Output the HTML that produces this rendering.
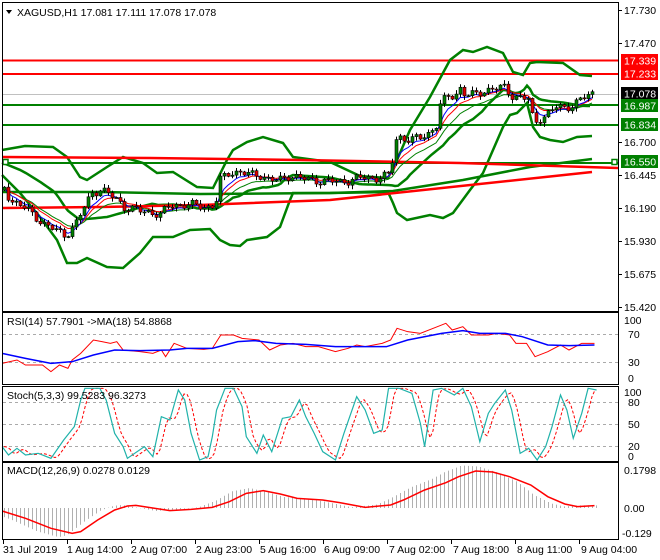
<!DOCTYPE html>
<html><head><meta charset="utf-8"><style>
html,body{margin:0;padding:0;background:#fff;width:660px;height:560px;overflow:hidden}
svg{display:block}
text{font-family:"Liberation Sans",sans-serif;font-size:10.5px;fill:#000}
</style></head><body>
<svg id="s" width="660" height="560" xmlns="http://www.w3.org/2000/svg">
<rect x="0" y="0" width="660" height="560" fill="#fff"/>
<g id="g"></g>
<!-- frames -->
<g fill="none" stroke="#000" stroke-width="1">
<rect x="2.5" y="2.5" width="616" height="309"/>
<rect x="2.5" y="312.5" width="616" height="72"/>
<rect x="2.5" y="386.5" width="616" height="75"/>
<rect x="2.5" y="462.5" width="616" height="77"/>
</g>
<!-- header texts -->
<path d="M6 10 L12 10 L9 14 Z" fill="#000"/>
<text x="17" y="16">XAGUSD,H1  17.081 17.111 17.078 17.078</text>
<text x="7" y="325">RSI(14) 57.7901  -&gt;MA(18) 54.8868</text>
<text x="7" y="399">Stoch(5,3,3) 99.5283 96.3273</text>
<text x="7" y="474">MACD(12,26,9) 0.0278 0.0129</text>
<!-- main axis -->
<g>
<text x="624" y="14">17.730</text>
<text x="624" y="47">17.470</text>
<text x="624" y="146">16.700</text>
<text x="624" y="179">16.445</text>
<text x="624" y="212">16.190</text>
<text x="624" y="245">15.930</text>
<text x="624" y="278">15.675</text>
<text x="624" y="311">15.420</text>
<rect x="621" y="54" width="37" height="13" fill="#ff0000"/><text x="624" y="64.5" style="fill:#fff">17.339</text>
<rect x="621" y="67" width="37" height="13" fill="#ff0000"/><text x="624" y="77.5" style="fill:#fff">17.233</text>
<rect x="621" y="87" width="37" height="13" fill="#000"/><text x="624" y="97.5" style="fill:#fff">17.078</text>
<rect x="621" y="99" width="37" height="13" fill="#008000"/><text x="624" y="109.5" style="fill:#fff">16.987</text>
<rect x="621" y="118" width="37" height="13" fill="#008000"/><text x="624" y="128.5" style="fill:#fff">16.834</text>
<rect x="621" y="155" width="37" height="13" fill="#008000"/><text x="624" y="165.5" style="fill:#fff">16.550</text>
<text x="624" y="324">100</text><text x="628" y="338">70</text><text x="628" y="366">30</text><text x="628" y="382">0</text>
<text x="624" y="396">100</text><text x="628" y="406">80</text><text x="628" y="428">50</text><text x="628" y="450">20</text><text x="628" y="460">0</text>
<text x="624" y="474">0.1798</text><text x="624" y="512">0.00</text><text x="622" y="537">-0.129</text>
</g>
<g>
<text x="3" y="553">31 Jul 2019</text>
<text x="67" y="553">1 Aug 14:00</text>
<text x="131" y="553">2 Aug 07:00</text>
<text x="196" y="553">2 Aug 23:00</text>
<text x="260" y="553">5 Aug 16:00</text>
<text x="324" y="553">6 Aug 09:00</text>
<text x="389" y="553">7 Aug 02:00</text>
<text x="453" y="553">7 Aug 18:00</text>
<text x="517" y="553">8 Aug 11:00</text>
<text x="581" y="553">9 Aug 04:00</text>
</g>
</svg>
<script>
var NS="http://www.w3.org/2000/svg",G=document.getElementById("g");
function el(t,a){var e=document.createElementNS(NS,t);for(var k in a)e.setAttribute(k,a[k]);G.appendChild(e);return e;}
function pl(pts,c,w,extra){var d=pts.map(function(p){return p[0]+","+p[1]}).join(" ");var a={points:d,fill:"none",stroke:c,"stroke-width":w};if(extra)for(var k in extra)a[k]=extra[k];return el("polyline",a);}
function interp(P,x){if(x<=P[0][0])return P[0][1];for(var i=1;i<P.length;i++){if(x<=P[i][0]){var t=(x-P[i-1][0])/(P[i][0]-P[i-1][0]);return P[i-1][1]+t*(P[i][1]-P[i-1][1]);}}return P[P.length-1][1];}
function conv(P,sx,ox,sy,oy){return P.map(function(p){return [p[0]/sx+ox,p[1]/sy+oy];});}
// grid lines
[[334],[362]].forEach(function(y){el("line",{x1:3,x2:618,y1:y[0]+.5,y2:y[0]+.5,stroke:"#aaa","stroke-dasharray":"3,3"});});
[402,424,446].forEach(function(y){el("line",{x1:3,x2:618,y1:y+.5,y2:y+.5,stroke:"#aaa","stroke-dasharray":"3,3"});});
// horizontal levels
el("line",{x1:3,x2:618,y1:94.5,y2:94.5,stroke:"#c0c0c0"});
el("line",{x1:3,x2:618,y1:60.5,y2:60.5,stroke:"#f00","stroke-width":2});
el("line",{x1:3,x2:618,y1:74,y2:74,stroke:"#f00","stroke-width":2});
el("line",{x1:3,x2:618,y1:105,y2:105,stroke:"#008000","stroke-width":2});
el("line",{x1:3,x2:618,y1:125,y2:125,stroke:"#008000","stroke-width":2});
// bands
var up=[[2,150],[25,146],[53,147],[67,157],[80,177],[87,180],[107,167],[123,157],[143,163],[157,173],[173,172],[197,187],[213,188],[227,160],[233,150],[247,142],[263,137],[283,143],[293,157],[330,162],[360,176],[388,178],[397,160],[410,130],[430,97],[450,60],[463,50],[473,52],[487,47],[503,53],[513,72],[523,75],[530,63],[537,62],[563,63],[580,75],[592,76]];
var lo=[[2,175],[20,193],[40,217],[57,240],[67,263],[77,263],[87,258],[107,267],[123,268],[140,253],[153,237],[173,237],[190,230],[210,229],[220,240],[230,245],[240,246],[247,240],[267,237],[280,227],[290,200],[293,193],[330,193],[388,192],[393,203],[397,213],[407,220],[430,215],[443,218],[453,213],[470,190],[483,173],[493,150],[503,127],[510,115],[517,113],[527,103],[533,127],[540,137],[550,140],[563,142],[577,137],[592,136]];
var mid=[];for(var x=2;x<=592;x+=3){mid.push([x,(interp(up,x)+interp(lo,x))/2]);}
pl(up,"#008000",2.5);pl(lo,"#008000",2.5);pl(mid,"#008000",2.5);
// long MAs
pl([[3,192],[100,192],[200,194],[330,193],[393,191],[463,180],[530,167],[592,159]],"#008000",2.5);
pl([[3,208],[100,207],[200,205],[330,200],[592,172]],"#f00",2.5);
el("line",{x1:3,x2:618,y1:163,y2:163,stroke:"#008000","stroke-width":2});
pl([[3,157],[150,158],[300,160],[460,163],[618,168]],"#f00",2.5);
el("rect",{x:3,y:159.5,width:5,height:5,fill:"#fff",stroke:"#008000","stroke-width":1.5});
el("rect",{x:612,y:159.5,width:5,height:5,fill:"#fff",stroke:"#008000","stroke-width":1.5});
// price
var pr=[[3,185],[10,200],[20,205],[30,212],[45,225],[55,230],[65,235],[75,225],[85,205],[92,192],[100,190],[110,195],[118,200],[125,208],[135,210],[150,212],[160,215],[170,205],[190,205],[210,207],[215,205],[220,180],[230,172],[240,172],[250,175],[260,175],[270,180],[280,180],[290,175],[300,178],[310,180],[340,182],[350,180],[360,178],[375,178],[390,175],[395,140],[400,137],[410,140],[420,138],[430,132],[436,125],[440,105],[447,97],[455,95],[460,88],[465,95],[475,95],[485,90],[495,88],[505,88],[510,95],[520,97],[530,100],[533,125],[540,118],[550,112],[555,107],[565,108],[575,103],[585,97],[591,94]];
var cl=[],xs=[];for(var x=4,i=0;x<=592;x+=4,i++){xs.push(x);cl.push(interp(pr,x)+3*Math.sin(i*1.7)+2*Math.sin(i*0.9));}
// MAs
function ema(a,n){var k=2/(n+1),o=[a[0]];for(var i=1;i<a.length;i++)o.push(o[i-1]+k*(a[i]-o[i-1]));return o;}
var e1=ema(cl,5),e2=ema(cl,8),e3=ema(cl,12);
pl(xs.map(function(x,i){return[x,e3[i]+2]}),"#008000",1);
pl(xs.map(function(x,i){return[x,e2[i]]}),"#f00",1);
pl(xs.map(function(x,i){return[x,e1[i]+1]}),"#00f",1);
// candles
for(var i=0;i<xs.length;i++){var c=cl[i],o=i?cl[i-1]:c+3;var hi=Math.min(o,c)-1-(i*7%4),lw=Math.max(o,c)+1+(i*5%4);var x=xs[i];
el("line",{x1:x+.5,x2:x+.5,y1:hi,y2:lw,stroke:"#000"});
var t=Math.min(o,c),h=Math.max(Math.abs(o-c),1);
el("rect",{x:x-1,y:t,width:3,height:h,fill:c<o?"#008000":"#e00000",stroke:"#000","stroke-width":.6});}
// RSI
var rr=[[5,190],[40,180],[60,195],[100,195],[120,215],[140,195],[160,205],[170,180],[190,160],[220,120],[240,125],[260,130],[275,125],[290,150],[330,155],[360,160],[380,150],[390,170],[410,130],[440,145],[480,148],[500,145],[520,105],[550,105],[570,115],[610,120],[635,150],[660,135],[690,130],[720,140],[750,140],[790,155],[820,145],[840,135],[860,140],[900,130],[920,120],[935,85],[960,95],[990,100],[1030,80],[1050,70],[1065,90],[1090,80],[1110,105],[1150,105],[1170,100],[1200,105],[1215,130],[1240,130],[1260,170],[1290,155],[1320,135],[1340,150],[1370,130],[1400,130]];
var rb=[[5,160],[60,175],[120,190],[170,185],[220,165],[270,150],[330,152],[400,150],[440,145],[500,145],[560,125],[600,122],[650,130],[720,133],[790,140],[860,140],[910,140],[960,120],[1040,100],[1090,92],[1130,100],[1190,100],[1230,110],[1290,135],[1340,137],[1400,135]];
pl(conv(rr,2.355,0,3,300),"#f00",1);pl(conv(rb,2.355,0,3,300),"#00f",1.5);
// Stoch
var st=[[5,440],[20,465],[40,445],[60,465],[90,460],[120,475],[150,420],[175,380],[190,300],[200,265],[235,265],[250,300],[270,400],[290,440],[300,475],[340,440],[360,470],[380,350],[400,360],[420,270],[435,300],[450,400],[470,480],[490,470],[500,410],[510,330],[530,265],[550,265],[570,320],[580,410],[605,460],[620,405],[640,455],[665,355],[685,350],[705,300],[720,350],[740,400],[760,455],[790,480],[810,400],[840,290],[860,330],[880,400],[900,390],[915,265],[940,265],[970,280],[990,370],[1000,440],[1020,270],[1040,265],[1070,285],[1090,265],[1110,320],[1130,425],[1150,340],[1165,310],[1190,270],[1205,330],[1225,460],[1245,445],[1265,480],[1285,440],[1300,380],[1320,285],[1335,330],[1350,415],[1370,340],[1385,265],[1405,270]];
var sc=conv(st,2.355,0,3,300);
var sd=[];for(var x=4;x<=596;x+=3){var v=(interp(sc,x-4)+interp(sc,x-6)+interp(sc,x-8))/3;sd.push([x,Math.min(v,460)]);}
pl(sd,"#f00",1,{"stroke-dasharray":"3,2"});
pl(sc.map(function(p){return[p[0],Math.min(Math.max(p[1],388),460)]}),"#20b2aa",1.2);
// MACD
var mc=[[5,633],[60,655],[120,685],[170,700],[190,695],[230,660],[270,630],[300,618],[320,616],[350,622],[400,632],[450,628],[500,622],[540,605],[580,580],[620,572],[660,582],[700,595],[760,600],[800,608],[860,622],[920,615],[950,600],[1000,570],[1050,548],[1080,530],[1120,513],[1160,516],[1200,530],[1250,555],[1290,590],[1330,612],[1360,620],[1400,617]];
var mcc=conv(mc,2.355,0,3,300);
for(var x=4;x<=596;x+=4){var v=interp(mcc,x+14);var z=508;var y=z+(v-z)*1.15;el("line",{x1:x+.5,x2:x+.5,y1:Math.min(z,y),y2:Math.max(z,y),stroke:"#b0b0b0"});}
pl(mcc,"#f00",1.5);
// time ticks
for(var x=3;x<=600;x+=64){el("line",{x1:x+.5,x2:x+.5,y1:540,y2:544,stroke:"#000"});}
// right axis ticks
[10,43,142,175,208,241,274,307].forEach(function(y){el("line",{x1:618,x2:622,y1:y+.5,y2:y+.5,stroke:"#000"});});
</script>
</body></html>
